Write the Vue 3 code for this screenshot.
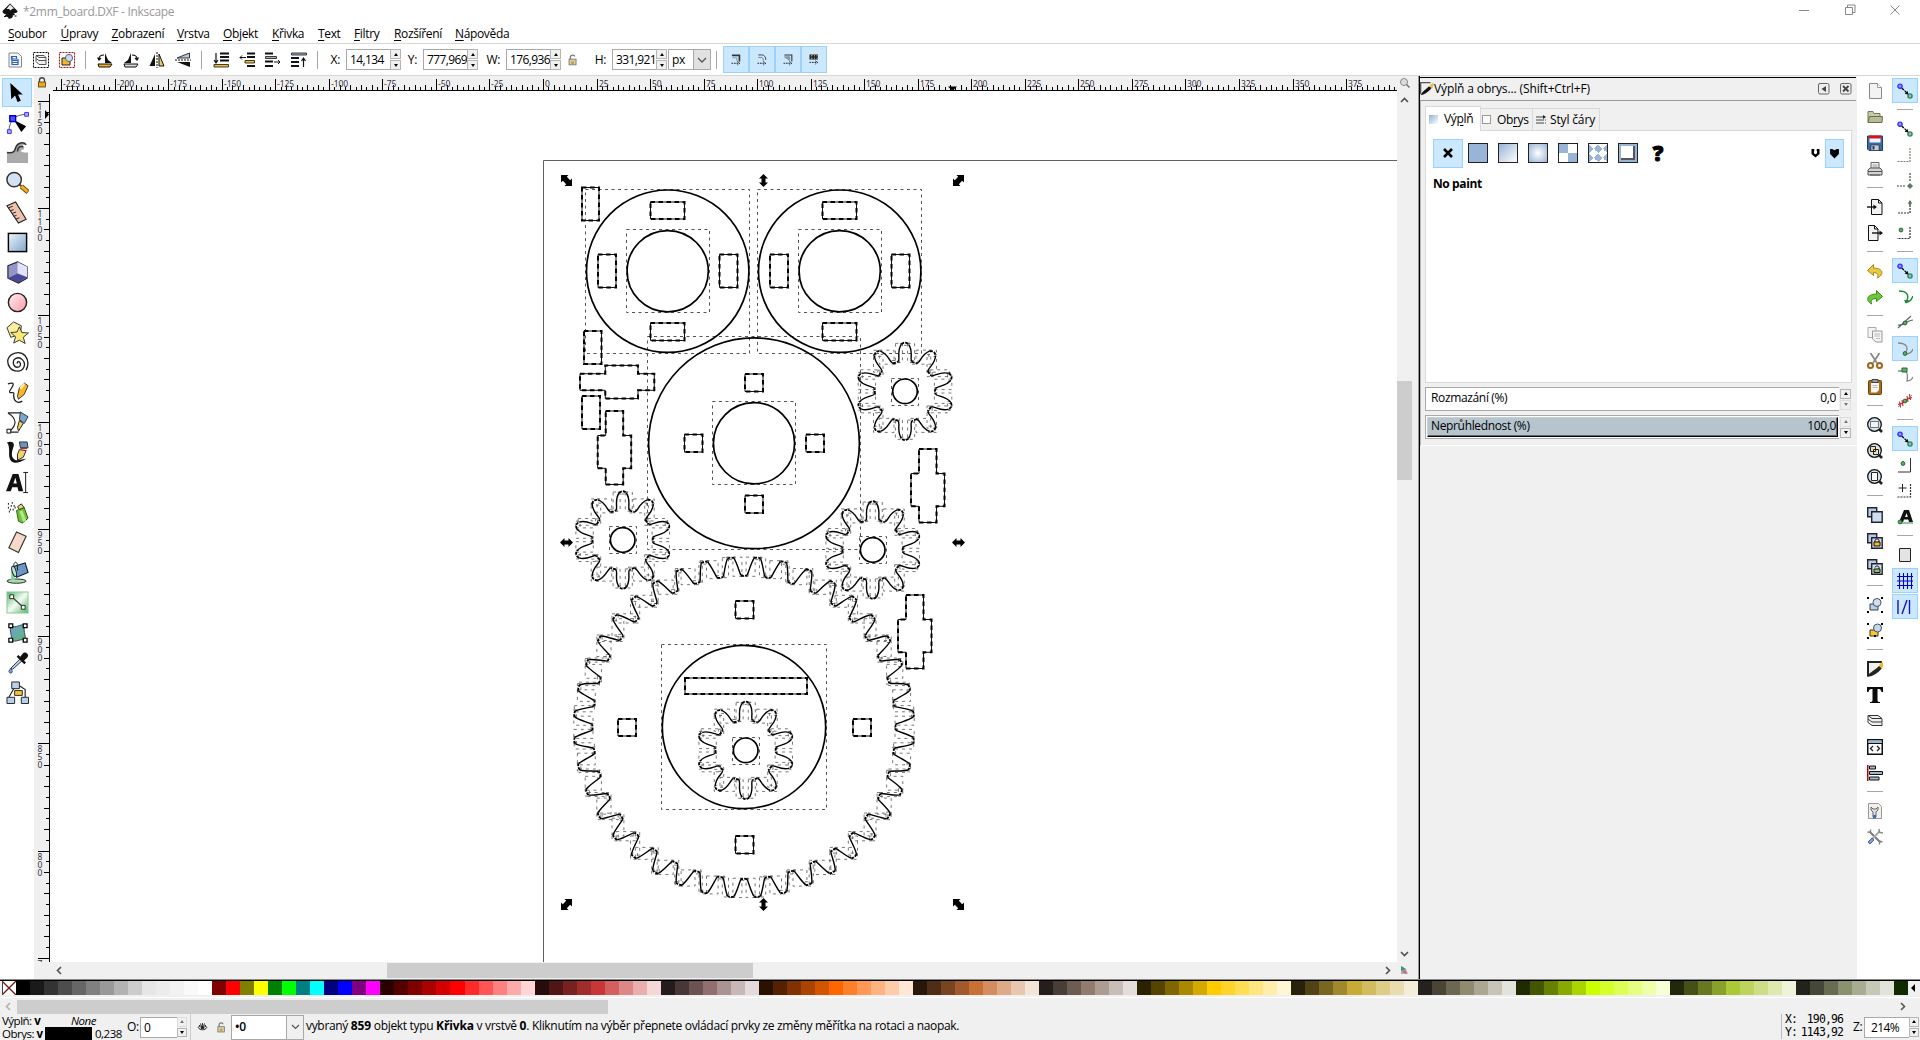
<script setup>
const menu = [
  ['S', 'oubor', 52.5], ['Ú', 'pravy', 51], ['Z', 'obrazení', 65.5], ['V', 'rstva', 46], ['O', 'bjekt', 49],
  ['K', 'řivka', 46], ['T', 'ext', 36], ['F', 'iltry', 40], ['R', 'ozšíření', 61], ['N', 'ápověda', 60],
]

const node = (x, y, c, f) => `<circle cx="${x}" cy="${y}" r="2.1" fill="${f}" stroke="${c}" stroke-width="1.4"/>`
const snapMain = node(3, 3.2, '#33f', '#99f') + node(13, 13, '#2a8a4a', '#8fb8d0') +
  '<path d="M5 5.2l4.5 4.3" stroke="#000" stroke-width="1.3" stroke-dasharray="2.5 1"/><path d="M11.5 11.6L7.6 10.8l3-2.8z" fill="#000"/>'
const greenDot = (x, y) => `<circle cx="${x}" cy="${y}" r="1.9" fill="#5fae6b" stroke="#226633" stroke-width="1"/>`
const stackIcon = '<path d="M.7.700h9v9h-9z" fill="#b9cbe0" stroke="#223" stroke-width="1.400"/><path d="M4.700 4.700h10.500v10.500H4.700z" fill="#cfdff0" stroke="#223" stroke-width="1.400"/>'
const lens = '<path d="M12 12l3 3" stroke="#222" stroke-width="2.6"/><circle cx="7.5" cy="7.5" r="6.8" fill="#d5e3f0" stroke="#111" stroke-width="1.3"/>'
const corners = '<path d="M0 0h2v2H0zM14 0h2v2h-2zM0 14h2v2H0zM14 14h2v2h-2z" fill="#000"/>'

const icons = {
  // document and selection toolbar
  selAll: '<path d="M2 1h9l3.500 3.500V15H2z" fill="#f6f6f6" stroke="#888"/><path d="M4.500 4.500h5v2.500h-5zM4.500 8.500h7M4.500 10.500h7M4.500 12.500h7M5 4v9M11 7v6" fill="none" stroke="#2a62b8" stroke-width="1.200"/>',
  selLayers: '<rect x=".5" y=".5" width="15" height="15" fill="none" stroke="#000" stroke-dasharray="2 1"/><path d="M3 3.500h8l2 2H6zM3 6.500l3 2h7M3 9.500l3 3h7V6M3 3.500v6" fill="#eee" stroke="#555"/>',
  desel: '<rect x=".5" y=".5" width="15" height="15" fill="#fff" stroke="#c00" stroke-dasharray="2 1"/><path d="M3 6h8v7H3z" fill="#f5b828" stroke="#222"/><circle cx="10" cy="6" r="3.600" fill="#c9dbeb" stroke="#567"/>',
  rotL: '<path d="M8 11V1l3 7 4 3z" fill="#111"/><path d="M1 12h14l-2 3H2z" fill="#efb52a" stroke="#111"/><path d="M2 7c0-3 2-4 5-4M.5 5.500L2 8l2-2" fill="none" stroke="#111" stroke-width="1.200"/>',
  rotR: '<path d="M8 11V1L5 8l-4 3z" fill="#111"/><path d="M1 12h14l-2 3H2z" fill="#d5dbe2" stroke="#111"/><path d="M14 7c0-3-2-4-5-4M15.500 5.500L14 8l-2-2" fill="none" stroke="#111" stroke-width="1.200"/>',
  flipH: '<path d="M6 2v12H.5z" fill="#111"/><path d="M10 2v12h5z" fill="#e8c96a" stroke="#111"/><path d="M8 0v16" stroke="#111" stroke-dasharray="2 1"/>',
  flipV: '<path d="M14.500 1v5H2z" fill="#b9c9da" stroke="#333"/><path d="M15 15v-5H2z" fill="#111"/><path d="M0 8h16" stroke="#111" stroke-dasharray="2 1"/>',
  toBottom: '<path d="M7 .5h9v2H7zM7 4h9v2H7zM7 7.500h9v2H7z" fill="#111"/><path d="M1 12.500h14.500v2.500H1z" fill="#eebc35" stroke="#111" stroke-width=".8"/><path d="M3 1v9M1 8l2 3 2-3" fill="none" stroke="#111" stroke-width="1.200"/>',
  lower: '<path d="M8 .5h8v2H8zM8 4h8v2H8zM8 13h8v2H8z" fill="#111"/><path d="M6 8.500h9.500v2.500H6z" fill="#eebc35" stroke="#111" stroke-width=".8"/><path d="M1 5.500h6M3 3.500l-2 2 2 2" fill="none" stroke="#111"/>',
  raise: '<path d="M0 .5h8v2H0zM0 8.500h8v2H0zM0 13h8v2H0z" fill="#111"/><path d="M.5 4.500h11v2H.5z" fill="#9fb2c6" stroke="#111" stroke-width=".8"/><path d="M9 10h6M13 8l2 2-2 2" fill="none" stroke="#111"/>',
  toTop: '<path d="M0 5h8v2H0zM0 9h8v2H0zM0 13h8v2H0z" fill="#111"/><path d="M.5 1h15v2H.5z" fill="#9fb2c6" stroke="#111" stroke-width=".8"/><path d="M12.500 15V6.500M10.500 9l2-3 2 3" fill="none" stroke="#111" stroke-width="1.200"/>',
  lock: '<path d="M5 7V4.500C5 2 9.500 1.500 10 4" fill="none" stroke="#777" stroke-width="1.500"/><rect x="3.500" y="7" width="8" height="6.500" fill="#d8cfa8" stroke="#777"/><path d="M6 9.500h3v3H6z" fill="#c8a030"/>',
  tgl1: '<path d="M3.500 4h9v7.500" fill="none" stroke="#2a3a3a" stroke-width="2"/><path d="M4 7h5.500v4" fill="none" stroke="#889"/><path d="M3 13.500h8M10 11.500l3 2-3 2" stroke="#000" fill="none" stroke-dasharray="2 1"/>',
  tgl2: '<path d="M4 3.500h4c3 0 5 2 5 6" fill="none" stroke="#445" stroke-width="1.200"/><path d="M4 6.500h3c2 0 3 1 3 4" fill="none" stroke="#667"/><path d="M3 13.500h8M10 11.500l3 2-3 2" stroke="#000" fill="none" stroke-dasharray="2 1"/>',
  tgl3: '<path d="M4 3.500h9v8" fill="none" stroke="#333" stroke-width="1.300"/><path d="M4 5h7v6L4 6.500z" fill="#8899a9"/><path d="M3 13.500h8M10 11.500l3 2-3 2" stroke="#000" fill="none" stroke-dasharray="2 1"/>',
  tgl4: '<path d="M3 3h10v6H3z" fill="#222"/><path d="M5 4.500h1.500M8.500 4.500h1M11.500 4.500h1M5 7.500h1.500M8.500 7.500h1M11.500 7.500h1" stroke="#e8d9a0" stroke-width="1.300"/><path d="M3 12.500h8M10 10.500l3 2-3 2" stroke="#000" fill="none" stroke-dasharray="2 1"/>',
  // commands
  new: '<path d="M2.500.5h8l4 4v11h-12z" fill="#f3f3f2" stroke="#888"/><path d="M10.500.5v4h4" fill="#fff" stroke="#999"/>',
  open: '<path d="M1 13V2.500h5l1 2h6V13z" fill="#c9c9a8" stroke="#77775a"/><path d="M2.500 7.500h13L15 13.500H1z" fill="#b7bb96" stroke="#6a6d50"/>',
  save: '<path d="M.5 1h15v14.500H2L.5 14z" fill="#3a68a8" stroke="#1e3f70"/><path d="M2 .5h12v3H2z" fill="#e01010"/><path d="M2.500 3.500h11v4h-11z" fill="#f5f5f5"/><path d="M4 10h8v5.500H4z" fill="#ccc" stroke="#333" stroke-width=".7"/><path d="M5.500 11h2v3.500h-2z" fill="#1e3f70"/>',
  print: '<path d="M4 8V1.500h8V8" fill="#f2f2f2" stroke="#666"/><path d="M5.500 4h5M5.500 6h5" stroke="#999"/><path d="M1 9l2-2h10l2 2v5H1z" fill="#d3d3d0" stroke="#555"/><path d="M1 10.500h14M3 14h10" stroke="#555"/>',
  import: '<path d="M4.500.5h7l3.500 3.500v11.500H4.500z" fill="#f3f3f2" stroke="#111"/><path d="M11.500.5V4H15" fill="none" stroke="#111"/><path d="M0 8h8" stroke="#111" stroke-width="1.400"/><path d="M6.500 5.500L10 8l-3.500 2.500z" fill="#111"/>',
  export: '<path d="M1.500.5h6L11 4v11.500H1.500z" fill="#f3f3f2" stroke="#111"/><path d="M7.500.5V4H11" fill="none" stroke="#111"/><path d="M5 8h9" stroke="#111" stroke-width="1.400"/><path d="M12.500 5.500L16 8l-3.500 2.500z" fill="#111"/>',
  undo: '<path d="M6.500 1.500L.5 7.500l6 5V9.500c4 0 5 2 4 5.500 6-3 7-9.500-4-10z" fill="#eac83c" stroke="#a8841a"/>',
  redo: '<path d="M9.500 1.500l6 6-6 5V9.500c-4 0-6 1.500-5 5.500C-1 12-1.500 5.500 9.500 5z" fill="#6cc83a" stroke="#3f8a1c"/>',
  copy: '<path d="M1 .500h8v10H1z" fill="#f4f4f4" stroke="#aaa"/><path d="M5.500 4h9.500v11h-6l-3.500-3z" fill="#f4f4f4" stroke="#999"/><path d="M7.500 7h5.500M7.500 9h5.500M9 11.500h4" stroke="#bbb"/>',
  cut: '<path d="M3.500 0l6.500 10M12.500 0L6 10" stroke="#8a8a88" stroke-width="1.800"/><circle cx="3.500" cy="12.500" r="2.500" fill="none" stroke="#a0661a" stroke-width="2"/><circle cx="12.500" cy="12.500" r="2.500" fill="none" stroke="#a0661a" stroke-width="2"/>',
  paste: '<rect x="1.500" y="1.500" width="13" height="14" rx="1" fill="#a86c1c" stroke="#6b430c"/><path d="M4 4h8v7l-2.500 2.500H4z" fill="#f6f6f6"/><path d="M5 .500h6v3H5z" fill="#999" stroke="#444"/><path d="M5.500 6.500h5M5.500 8.500h5" stroke="#bbb"/>',
  zoomSel: lens + '<rect x="3.500" y="4.500" width="8" height="6" fill="#eef4fa" stroke="#000" stroke-dasharray="1 1"/>',
  zoomDraw: lens + '<path d="M3.500 3.500h5v5h-5zM6.500 6.500h5v5h-5z" fill="#f6e2a0" stroke="#222"/>',
  zoomPage: lens + '<path d="M4.500 3.500h6v8h-6z" fill="#fff" stroke="#222"/>',
  dup: stackIcon,
  clone: stackIcon + '<path d="M8 9V7.500c0-2 4-2 4 0V9" fill="none" stroke="#111"/><path d="M7 9h6v4H7z" fill="#f3bb26" stroke="#111"/>',
  unlink: stackIcon + '<path d="M8 8.500c0-2 4-2 4 0V10" fill="none" stroke="#111"/><path d="M7 10h6v3.500H7z" fill="#8ec45a" stroke="#111"/>',
  group: corners + '<path d="M3 7h8v6H3z" fill="#bcd0e4" stroke="#345"/><circle cx="10" cy="5.500" r="4" fill="#cfe0ef" stroke="#456"/>',
  ungroup: corners + '<path d="M3 7h8v6H3z" fill="#f5c838" stroke="#431"/><circle cx="10.500" cy="5" r="4" fill="#c5d6e6" stroke="#456"/><path d="M7 12h2v2H7z" fill="#000"/>',
  fill: '<path d="M.5.500h15L.5 15.500z" fill="#eee"/><path d="M0 0h15v2H2v13H0z" fill="#222"/><path d="M0 16c2-5 6-5 12-11l3 2C11 12 7 15 0 16z" fill="#222"/><path d="M12 4l3-3 1 1v4l-2 1z" fill="#f5b81a"/>',
  text: '<path d="M0 0h16v5h-1.500C14 2.500 13 2 10.500 2v11c0 1.500.5 2 2.500 2v1H3v-1c2 0 2.500-.5 2.500-2V2C3 2 2 2.500 1.500 5H0z" fill="#0a0a0a"/>',
  layers: '<path d="M1 2.500h10l4 3H5zM1 6l4 3h10v-3M1 9.500l4 3h10v-3M1 2.500v7" fill="#f0f0f0" stroke="#333"/>',
  xml: '<rect x=".75" y=".750" width="14.500" height="14.500" fill="#fff" stroke="#111" stroke-width="1.500"/><path d="M1.500 1.500h13v2.500h-13z" fill="#9cb9d8"/><path d="M1 4.500h14" stroke="#111"/><path d="M6 7L3.500 9.500 6 12M10 7l2.500 2.500L10 12" fill="none" stroke="#222" stroke-width="1.300"/>',
  align: '<path d="M.750 0v16" stroke="#b00" stroke-width="1.500"/><path d="M2.500 1h6v3h-6zM2.500 6.500h13v3h-13zM2.500 12h9.500v3h-9.500z" fill="#9fb8d0" stroke="#111"/>',
  docPrefs: '<path d="M1.500.5h10l3 3v12h-13z" fill="#f0f0ef" stroke="#999"/><path d="M4 4v3l2 2v5h3V9l2-2V4L9 6H6z" fill="#ddd" stroke="#666"/><path d="M6 12h3v3.500H6z" fill="#3a6db8"/>',
  prefs: '<path d="M2.500 2.500l11 11" stroke="#777" stroke-width="2"/><path d="M13 2l-8 8" stroke="#aaa" stroke-width="2"/><path d="M.5 3l3 .5 0-3M12 0l.5 3.500L16 4M15.500 13l-3-1 0 3.500" fill="none" stroke="#888" stroke-width="1.400"/><path d="M1 13l4-4 2 2-4 4z" fill="#7f9fd0" stroke="#47659a"/>',
  // snapping
  snap: snapMain,
  snBox: '<path d="M13 1v13.500H0" fill="none" stroke="#6a8a6a" stroke-width="1.200" stroke-dasharray="2 1"/>',
  snCorner: '<path d="M13 0v9M0 13h9" fill="none" stroke="#444" stroke-width="1.200" stroke-dasharray="2 1"/><path d="M13 10l3 3-3 3-3-3z" fill="#567a5a"/>',
  snMid: '<path d="M13 6v8H0" fill="none" stroke="#333" stroke-width="1.200" stroke-dasharray="2 1"/><path d="M13 1l2 3-2 3-2-3z" fill="#567a5a"/>',
  snCenter: '<path d="M13 2v11.500H0" fill="none" stroke="#333" stroke-width="1.200" stroke-dasharray="2 1"/>' + greenDot(4, 5),
  snPath: '<path d="M2 2c8 0 10 4 8 9M8 13c4 1 6-1 8-6" fill="none" stroke="#1f8a3a" stroke-width="1.500"/><path d="M7 11h5l-3 3.500z" fill="#1f8a3a"/>',
  snInter: '<path d="M1 13L14 1M1 10c6 1 9-5 15-5" fill="none" stroke="#666" stroke-width="1.200"/>' + greenDot(8, 8),
  snCusp: '<path d="M1 2c9 0 11 5 7 11 5 0 7-2 8-5" fill="none" stroke="#888" stroke-width="1.300"/>' + greenDot(8, 12.5),
  snSmooth: '<path d="M1 4h7c4 2 2 8 2 10 3 0 5-1 6-4" fill="none" stroke="#888" stroke-width="1.300"/><path d="M5 1h5v4H5z" fill="#5fae6b" stroke="#263"/>',
  snLineMid: '<path d="M1 14L15 2" stroke="#999"/><path d="M2.500 8.500l1 6M5 7l1 6M10 3l1 6M12.500 1l1 6M1 11.500l6-2M9 6.500l6-2" stroke="#c22" stroke-width="1.100"/>' + greenDot(8, 8),
  snObjMid: '<path d="M13.500 1v14H1" fill="none" stroke="#333"/>' + greenDot(6, 6.5),
  snRot: '<path d="M5.500 1v8M1.500 5h8" stroke="#222"/><path d="M13.500 1v13H0" fill="none" stroke="#333" stroke-width="1.200" stroke-dasharray="2 1"/>',
  snText: '<path d="M2 13L7 1h5l4 12h-4l-.7-2.500H7L6 13zM8 8h2.700L9.700 4z" fill="#111"/><path d="M3 14h13" stroke="#2a8a4a"/>' + greenDot(3, 13),
  snPage: '<path d="M2.500 1.500h11v13h-11z" fill="#e3e3e3" stroke="#222"/>',
  snGrid: '<path d="M0 3.500h16M0 8h16M0 12.500h16M2.500 0v16M6.500 0v16M10.500 0v16M14.500 0v16" stroke="#0000c8" stroke-width="1.100"/>',
  snGuide: '<path d="M1 1v14M12.500 1v14M5 15l5-14" stroke="#1414c8" stroke-width="1.400"/>',
  brush: '<path d="M0 0h12v1.500H1.500V14H0z" fill="#555"/><path d="M1 15c2-5 5-6 9-10l4 1c-4 5-8 8-13 9z" fill="#111"/><path d="M10 5l4-4 2 1-2 5z" fill="#e8c04a"/>',
}

// toolbox icons, 24-unit box
const tools = [
  '<path d="M8 2l1 17 4-4 2.500 7 3.500-1.500-3-6.500h5z" fill="#000" transform="translate(-3.500 0)"/>',
  '<path d="M3 21C4 9 9 4 21 3.500" fill="none" stroke="#555"/><path d="M8 9l13 7-5 6z" fill="#000"/><path d="M4 5h6v6H4z" fill="#55f" stroke="#00c" stroke-width="1.500"/><path d="M19.500 1.500h4v4h-4zM1.500 19.500h4v4h-4z" fill="#aaf" stroke="#33f"/>',
  '<path d="M1 12c7 1 8-1 9-5 2-5 8-7 12-3-3-1-5 0-5 2 2-1 3 2 1 3-3 0-5 3 5 3v11H1z" fill="#aaa"/><path d="M1 12c7 1 8-1 9-5 2-5 8-7 11-3M12 11c0-4 2-6 6-5" fill="none" stroke="#333" stroke-width="1.600"/>',
  '<path d="M14 14l3 3" stroke="#444" stroke-width="2"/><path d="M16 16l7 6" stroke="#7a5010" stroke-width="5"/><path d="M16 16l6.500 5.500" stroke="#f5ae20" stroke-width="3"/><circle cx="8.500" cy="9" r="7.500" fill="#d3e2f0" stroke="#333" stroke-width="1.500"/>',
  '<path d="M1 5l9-4 11 18-8 4z" fill="#efc2ae" stroke="#222" stroke-width="1.200"/><path d="M3 7l4-1.500M5 10l3-1M6.500 13l4-1.500M8 16l3-1M10 19l4-1.500" stroke="#222"/>',
  '<rect x="2.500" y="2.500" width="19" height="19" fill="url(#gBlue)" stroke="#000" stroke-width="1.500"/>',
  '<path d="M2 5l10-4 10 5v12l-9 5-11-5z" fill="#9494c8" stroke="#223" stroke-width="1.200"/><path d="M12 1l10 5v11l-10-4z" fill="#e2e2fa"/><path d="M2 18l10-5 10 4-9 5.500z" fill="#484894"/>',
  '<circle cx="12" cy="12" r="9.500" fill="url(#gPink)" stroke="#222" stroke-width="1.500"/>',
  '<path d="M1 7l7-6 8 4-1 9-10 3z" fill="#f8f0a0" stroke="#333"/><path d="M14 6l2.500 6 7 .5-5.500 4.500 2 6.500-6-3.500-6 3 2-6.500L5 12l6.500-.5z" fill="#fbe874" stroke="#333"/>',
  '<path d="M12 13c-1-2 2-3 3 0 1 4-5 6-7 1-2-6 5-9 9-5 5 5 1 12-5 12C5 21 1 15 2 9 4 2 14-1 20 5c4 5 3 11 1 15" fill="none" stroke="#222" stroke-width="1.400"/>',
  '<path d="M2 3c8-3 6 2 2 7-2 5 6-1 4 5 0 6 4 9 9 6" fill="none" stroke="#222" stroke-width="1.300"/><path d="M12 16l2-9 5-5 4 3-4 9-6 5z" fill="#f7b426" stroke="#333"/><path d="M14 7l4-5 2 1-4 6z" fill="#fff2a0"/>',
  '<path d="M2 2h13M2 2c10 6 9 13 2 19M5 22h8" fill="none" stroke="#222" stroke-width="1.200"/><path d="M15 1l8 5-4 7-5-4z" fill="#7fa4cc" stroke="#234"/><path d="M14 10l4 3-5 8-1-4z" fill="#f3cf5a" stroke="#222"/><path d="M1 19h4v4H1z" fill="#fff" stroke="#000"/>',
  '<path d="M1 1.500c5-2 8 0 7 4-2 6-3 10 0 13 3 3 5 1 13 0-8 5-15 6-17 0C2 14 5 6 1 1.500z" fill="#111"/><path d="M14 1h8l1 6h-8z" fill="#6e93b8" stroke="#234"/><path d="M15 7h7v1.500h-7z" fill="#c22"/><path d="M14 9l7 1-3 7-6 3 0-6z" fill="#f5d26a" stroke="#222"/>',
  '<path d="M0 21L7 3h6l5 18h-5l-1-4H6.500L5 21zM7.700 13h3.600L9.800 7z" fill="#111"/><path d="M18 1.500h5M18 22.500h5M20.500 2v20" stroke="#111"/>',
  '<path d="M2 3h1M5 5h1M2 7h1M6 2h1M8 5h1M4 9h1M9 7h1M3 11h1M7 9h1" stroke="#111" stroke-width="1.800"/><path d="M12 6l4-3 3 4-5 2z" fill="#f0d080" stroke="#222"/><path d="M11 10l8-3 4 11-6 5-4-2z" fill="#6fc23a" stroke="#2a5a12"/><path d="M14 11l3-1 4 10-3 2z" fill="#b5e88a"/>',
  '<path d="M11 1l10 4.500-8 17-10-5z" fill="#f8d8c8" stroke="#333" stroke-width="1.200"/>',
  '<ellipse cx="11" cy="21" rx="10" ry="2.200" fill="#a9dcb0" stroke="#222"/><path d="M4 20c3-3 0-9 3-13l3 10c-2 0-2 2 1 3z" fill="#8ccf98"/><path d="M7 6l13-4 3 10-12 5z" fill="#6d97c2" stroke="#123" stroke-width="1.200"/><ellipse cx="8.500" cy="11" rx="2" ry="5.500" fill="#bfe5c8" stroke="#123" transform="rotate(-18 8 11)"/><path d="M8 5c0-5 4-5 4 0v5" fill="none" stroke="#222"/>',
  '<rect x="1" y="1" width="22" height="22" fill="url(#gGreen)" stroke="#8ccb98"/><path d="M6 6l12 11" stroke="#444" stroke-width="1.300"/><path d="M4 4h4v4H4zM16 15h4v4h-4z" fill="#fff" stroke="#222"/>',
  '<path d="M5 5c6 3 9-2 15-1-3 6 1 10 0 16-6-2-9 3-15 0 2-6-2-9 0-15z" fill="url(#gMesh)" stroke="#345"/><path d="M3 3h4v4H3zM18 3h4v4h-4zM3 18h4v4H3zM18 18h4v4h-4z" fill="#fff" stroke="#000" stroke-width="1.300"/>',
  '<path d="M5 18L15 8l2 2L7 19z" fill="#b8d2ea" stroke="#234"/><path d="M14 7l4-5c3-2 7 2 4 5l-4 4z" fill="#111"/><path d="M12 5l8 8" stroke="#111" stroke-width="2.500"/><path d="M5 18c-3 3-2 5 0 5s2-2 0-5z" fill="#7aa7d8" stroke="#357"/>',
  '<path d="M8 8L3 17M14 5l6 4v8" fill="none" stroke="#222" stroke-width="1.200"/><path d="M6 1h8v7H6zM1 17h8v6.500H1zM16 17h7.500v6.500h-7.500z" fill="#b9d0ea" stroke="#222"/><path d="M9 10h8v5H9z" fill="#f8c926" stroke="#222"/>',
]

const cmds = ['new', 'open', 'save', 'print', 0, 'import', 'export', 0, 'undo', 'redo', 0, 'copy', 'cut', 'paste', 0,
  'zoomSel', 'zoomDraw', 'zoomPage', 0, 'dup', 'clone', 'unlink', 0, 'group', 'ungroup', 0,
  'fill', 'text', 'layers', 'xml', 'align', 0, 'docPrefs', 'prefs']
const snaps = ['*snap', 0, 'snap', 'snBox', 'snCorner', 'snMid', 'snCenter', 0, '*snap', 'snPath', 'snInter', '*snCusp',
  'snSmooth', 'snLineMid', 0, '*snap', 'snObjMid', 'snRot', 'snText', 0, 'snPage', '*snGrid', '*snGuide']
const barA = ['selAll', 'selLayers', 'desel']
const barB = ['rotL', 'rotR', 'flipH', 'flipV']
const barC = ['toBottom', 'lower', 'raise', 'toTop']
const toggles = ['tgl1', 'tgl2', 'tgl3', 'tgl4']

const swatches = (
  '000000 1a1a1a 333333 4d4d4d 666666 808080 999999 b3b3b3 cccccc e6e6e6 ececec f2f2f2 f9f9f9 ffffff ' +
  '800000 ff0000 808000 ffff00 008000 00ff00 008080 00ffff 000080 0000ff 800080 ff00ff ' +
  '2b0000 550000 800000 aa0000 d40000 ff0000 ff2a2a ff5555 ff8080 ffaaaa ffd5d5 ' +
  '280b0b 501616 782121 a02c2c c83737 d35f5f de8787 e9afaf f4d7d7 241c1c 483737 6c5353 916f6f ac9393 c8b7b7 e3dbdb ' +
  '2b1100 552200 803300 aa4400 d45500 ff6600 ff7f2a ff9955 ffb380 ffccaa ffe6d5 ' +
  '28170b 502d16 784421 a05a2c c87137 d38d5f deaa87 e9c6af f4e3d7 241f1c 483e37 6c5d53 917c6f ac9d93 c8beb7 e3dedb ' +
  '2b2200 554400 806600 aa8800 d4aa00 ffcc00 ffd42a ffdd55 ffe680 ffeeaa fff6d5 ' +
  '28220b 504416 786721 a0892c c8ab37 d3bc5f decd87 e9ddaf f4eed7 24221c 484537 6c6753 918a6f aca793 c8c4b7 e3e2db ' +
  '222b00 445500 668000 88aa00 aad400 ccff00 d4ff2a ddff55 e5ff80 eeffaa f6ffd5 ' +
  '22280b 445016 677821 89a02c abc837 bcd35f cdde87 dde9af eef4d7 22241c 454837 676c53 8a916f a7ac93 c4c8b7 e2e3db 112b00'
).split(' ')

// rulers: 2.1415 px per unit, origin at x = 543
const U = 2.1415
const hTicks = []
const hLabels = []
for (let i = -92; i <= 160; i++) {
  const x = Math.round(543 + i * 2.5 * U)
  if (x < 53 || x > 1396) continue
  const major = ((i % 10) + 10) % 10 === 0
  hTicks.push(`M${x + 0.5} 90V${major ? 79 : i % 2 === 0 ? 85 : 87}`)
  if (major) hLabels.push({ x: x + 2, t: String(i * 2.5) })
}
const vTicks = []
const vLabels = []
for (let i = 0; i < 81; i++) {
  const y = Math.round(101 + i * 5 * U)
  if (y > 960) continue
  const major = i % 10 === 0
  vTicks.push(`M49 ${y + 0.5}H${major ? 38 : i % 2 === 0 ? 44 : 46}`)
  if (major) {
    String(1150 - i * 5).split('').forEach((c, k) => {
      const base = y + 8.500 + k * 8
      if (base < 968) vLabels.push({ y: base, t: c })
    })
  }
}

// drawing
const rings = [
  [667.7, 271.2, 81.2], [667.7, 271.2, 40.6], [839.7, 271.2, 81.2], [839.7, 271.2, 40.6],
  [754, 443.3, 105.4], [754, 443.3, 40.6], [744, 727, 81.7],
  [905, 391.3, 12.3], [622.7, 540, 12.3], [872.7, 550, 12.3], [745.7, 750.3, 12.3],
]
const boxes = [
  [582, 187.500, 17, 33], [584, 331, 17.500, 33], [582, 396, 18, 33],
  [650.500, 202, 34, 17], [650.500, 323, 34, 17.500], [598, 254.500, 18, 33], [719.500, 254.500, 18, 33],
  [822.500, 202, 34, 17], [822.500, 323, 34, 17.500], [770, 254.500, 18, 33], [891.500, 254.500, 18, 33],
  [745, 374, 18, 17.500], [745, 495.500, 18, 17.500], [684.500, 434.500, 18, 17.500], [806, 434.500, 18, 17.500],
  [735.500, 601, 18, 17.500], [735.500, 836, 18, 17.500], [618, 719, 18, 17], [853, 719, 18, 17],
  [685, 678, 122, 16],
].map(([x, y, w, h]) => `M${x} ${y}h${w}v${h}h${-w}z`)
const vCross = (x, y) => `M${x} ${y}h17.500v24.500h8v32.800h-8v16.200h-17.500v-16.200h-8v-32.800h8z`
boxes.push('M580 373.700h25.300v-8.300h32.700v8.300h16.300v16.600h-16.300v8.300h-32.700v-8.300h-25.300z',
  vCross(605.700, 411), vCross(919, 449), vCross(906, 595))

const gears = { flanks: [], tips: [], bounds: [] }
function gear(cx, cy, n, phase, half, valley) {
  // half: tooth profile [half width, radius] from root to tip
  const at = (w, r, a) => [cx + r * Math.sin(a) + w * Math.cos(a), cy - r * Math.cos(a) + w * Math.sin(a)]
  const f = (p) => p.map((v) => v.toFixed(1)).join(' ')
  const bound = (pts) => {
    const xs = pts.map((p) => p[0]), ys = pts.map((p) => p[1])
    const x = Math.min(...xs) - 1, y = Math.min(...ys) - 1
    gears.bounds.push(`M${x.toFixed(1)} ${y.toFixed(1)}H${(Math.max(...xs) + 1).toFixed(1)}V${(Math.max(...ys) + 1).toFixed(1)}H${x.toFixed(1)}z`)
  }
  for (let k = 0; k < n; k++) {
    const a = phase + (k * 2 * Math.PI) / n
    const next = a + (2 * Math.PI) / n
    for (const s of [-1, 1]) {
      const p = half.map(([w, r]) => at(s * w, r, a))
      gears.flanks.push(`M${f(p[0])}C${f(p[1])} ${f(p[2])} ${f(p[3])}`)
      bound([p[0], p[2], p[3]])
    }
    const l = at(-half[3][0], half[3][1], a), r = at(half[3][0], half[3][1], a), t = at(0, half[3][1] + valley[0], a)
    gears.tips.push(`M${f(l)}Q${f(t)} ${f(r)}`)
    bound([l, r])
    const b = at(half[0][0], half[0][1], a), c = at(-half[0][0], half[0][1], next)
    const m = at(0, half[0][1] + valley[1], (a + next) / 2)
    gears.tips.push(`M${f(b)}Q${f(m)} ${f(c)}`)
    bound([b, c])
  }
}
const small = [[6.800, 29.800], [4.600, 32], [8.600, 40], [3.600, 47]]
const pinion = [[905, 391.300], [622.700, 540], [872.700, 550], [745.700, 750.300]]
pinion.forEach(([x, y]) => gear(x, y, 10, 0, small, [3.500, 0]))
gear(744, 727.300, 40, Math.PI / 40, [[8.800, 151.800], [6.800, 158], [6, 164], [3.200, 169.500]], [1.500, -1])

const straight = 'M-6.500 0L-2-4.500V-2H2V-4.500L6.500 0L2 4.500V2H-2V4.500z'
const diagonal = 'M-5.500-5.500H2L.3-3.700L3.700-.3L5.500-2V5.500H-2L-.3 3.700L-3.700.3L-5.500 2z'
const handles = [
  [566.500, 180.500, 0, 1], [763.500, 180.500, 90, 0], [958.500, 180.500, 90, 1], [566.500, 542.500, 0, 0],
  [958.500, 542.500, 0, 0], [566.500, 904.500, 90, 1], [763.500, 904.500, 90, 0], [958.500, 904.500, 0, 1],
]
const paints = ['flat', 'linear', 'radial', 'mesh', 'pattern', 'swatch']
</script>

<template>
  <div class="window">
    <svg class="defs" width="0" height="0">
      <defs>
        <linearGradient id="gBlue" x1="0" y1="0" x2="1" y2="1"><stop offset="0" stop-color="#eef4fa" /><stop offset="1" stop-color="#7fa5cc" /></linearGradient>
        <linearGradient id="gPink" x1="0" y1="0" x2="1" y2="1"><stop offset="0" stop-color="#fff0f2" /><stop offset="1" stop-color="#ff9aa6" /></linearGradient>
        <linearGradient id="gGreen" x1="0" y1="0" x2="1" y2="1"><stop offset="0" stop-color="#4fb565" /><stop offset=".5" stop-color="#f4fbf5" /><stop offset="1" stop-color="#4fb565" /></linearGradient>
        <linearGradient id="gMesh" x1="0" y1="0" x2="1" y2="1"><stop offset="0" stop-color="#6f9fd0" /><stop offset="1" stop-color="#62b878" /></linearGradient>
      </defs>
    </svg>

    <header class="title">
      <svg class="logo" width="16" height="17" viewBox="0 0 16 17"><path d="M8 .5L15.500 8c.5 1.500-2 2-4 2.500 2 .5 2 1.500.5 1.500-1.500.5-2 1-1 1.500-1 2-4 3-5 1.500 1-.5 0-1-2-1.500s-1-1.500.5-2C2 11 .2 9.500.5 8z" fill="#111" /><path d="M8 1.500l4 4-2 .5-1.500 1.500L7 6 4.500 6z" fill="#e6edf4" /><path d="M2 13.500h2M12.500 13h2" stroke="#111" /></svg>
      <span class="caption">*2mm_board.DXF - Inkscape</span>
      <svg class="winctl" width="110" height="14" viewBox="0 0 110 14" fill="none" stroke="#888"><path d="M4 7.500h10M50.500 4.500h7v7h-7zM52.500 4v-2h7.500v7.500h-2M95.500 2.500l9 9M104.500 2.500l-9 9" /></svg>
    </header>

    <nav class="menu">
      <span v-for="m in menu" :key="m[1]" :style="{ width: m[2] + 'px' }"><u>{{ m[0] }}</u>{{ m[1] }}</span>
    </nav>

    <div class="toolbar">
      <svg v-for="n in barA" :key="n" class="tb" viewBox="0 0 16 16" v-html="icons[n]" />
      <i class="vsep" />
      <svg v-for="n in barB" :key="n" class="tb" viewBox="0 0 16 16" v-html="icons[n]" />
      <i class="vsep" />
      <svg v-for="n in barC" :key="n" class="tb" viewBox="0 0 16 16" v-html="icons[n]" />
      <i class="vsep" />
      <label class="lx">X:</label><span class="entry">14,134</span><span class="spin"><b class="up" /><b class="dn" /></span>
      <label class="ly">Y:</label><span class="entry">777,969</span><span class="spin"><b class="up" /><b class="dn" /></span>
      <label class="lw">W:</label><span class="entry">176,936</span><span class="spin"><b class="up" /><b class="dn" /></span>
      <svg class="lk" viewBox="0 0 16 16" v-html="icons.lock" />
      <label class="lh">H:</label><span class="entry">331,921</span><span class="spin"><b class="up" /><b class="dn" /></span>
      <span class="unit"><span>px</span><i><svg width="10" height="6" viewBox="0 0 10 6"><path d="M1 1l4 4 4-4" fill="none" stroke="#555" stroke-width="1.300" /></svg></i></span>
      <i class="vsep last" />
      <span v-for="n in toggles" :key="n" class="tgl"><svg viewBox="0 0 18 18" width="15" height="15" v-html="icons[n]" /></span>
    </div>

    <main class="work">
      <aside class="toolbox">
        <span v-for="(t, i) in tools" :key="i" :class="{ on: i === 0 }"><svg width="23" height="23" viewBox="0 0 24 24" v-html="t" /></span>
      </aside>

      <section class="editor">
        <svg class="hruler" width="1363" height="15" viewBox="34 76 1363 15">
          <path d="M39.500 82v-2c0-3 5-3 5 0v2" fill="none" stroke="#444" stroke-width="1.300" /><rect x="38.500" y="82" width="7" height="5" fill="#e9a820" stroke="#553a00" stroke-width=".8" />
          <path d="M53 90.500H1397" stroke="#000" />
          <path :d="hTicks.join('')" stroke="#000" />
          <text v-for="l in hLabels" :key="l.x" :x="l.x" y="87">{{ l.t }}</text>
          <path d="M948 86.500h9l-4.500 4.500z" fill="#000" />
        </svg>
        <div class="corner"><svg width="12" height="12" viewBox="0 0 12 12"><circle cx="5" cy="5" r="3.500" fill="#ddd" stroke="#888" /><path d="M7.500 7.500l3 3" stroke="#777" stroke-width="1.600" /></svg></div>
        <svg class="vruler" width="16" height="871" viewBox="34 91 16 871">
          <path d="M49.500 94V962" stroke="#000" />
          <path :d="vTicks.join('')" stroke="#000" />
          <text v-for="l in vLabels" :key="l.y" x="37.500" :y="l.y">{{ l.t }}</text>
          <path d="M45 110v9l4-4.500z" fill="#000" />
        </svg>
        <svg class="canvas" width="1347" height="871" viewBox="50 91 1347 871" fill="none">
          <path d="M1397 160.500H543.500V962" stroke="#606060" />
          <g class="bb">
            <rect v-for="(c, i) in rings" :key="i" :x="Math.floor(c[0] - c[2] - 1) + 0.5" :y="Math.floor(c[1] - c[2] - 1) + 0.5" :width="Math.round(c[2] * 2 + 2)" :height="Math.round(c[2] * 2 + 2)" />
          </g>
          <path class="gb" :d="gears.bounds.join('')" />
          <circle v-for="(c, i) in rings" :key="'c' + i" :cx="c[0]" :cy="c[1]" :r="c[2]" stroke="#000" stroke-width="1.700" />
          <path :d="boxes.join('')" stroke="#111" stroke-width="1" />
          <path :d="boxes.join('')" stroke="#000" stroke-width="2" stroke-dasharray="4.500 3.500" />
          <path :d="gears.flanks.join('')" stroke="#000" stroke-width="1.400" />
          <path :d="gears.tips.join('')" stroke="#000" stroke-width="1.800" stroke-dasharray="3 1.200" />
          <path v-for="(h, i) in handles" :key="'h' + i" :d="h[3] ? diagonal : straight" :transform="`translate(${h[0]} ${h[1]}) rotate(${h[2]})`" fill="#000" />
        </svg>
        <div class="vscroll"><svg width="9" height="6" viewBox="0 0 9 6"><path d="M1 5l3.500-3.500L8 5" /></svg><i /><svg width="9" height="6" viewBox="0 0 9 6"><path d="M1 1l3.500 3.500L8 1" /></svg></div>
        <div class="hscroll"><svg width="6" height="9" viewBox="0 0 6 9"><path d="M5 1L1.500 4.500 5 8" /></svg><i /><svg width="6" height="9" viewBox="0 0 6 9"><path d="M1 1l3.500 3.500L1 8" /></svg></div>
        <div class="cms"><svg width="10" height="10" viewBox="0 0 10 10"><path d="M2 1l5 3 2 5H2z" fill="#b8a8c8" /><path d="M2 1l5 3-5 2z" fill="#3a9a6a" /><path d="M3 7l3-2 2 4z" fill="#d06070" /></svg></div>
      </section>

      <section class="dock">
        <div class="dtitle">
          <svg width="14" height="14" viewBox="0 0 16 16" v-html="icons.brush" /><span>Výplň a obrys... (Shift+Ctrl+F)</span>
          <svg width="34" height="12" viewBox="0 0 34 12"><rect x=".5" y=".5" width="10.500" height="10.500" rx="1.500" fill="#eee" stroke="#666" /><path d="M8 3v6L3.500 6z" fill="#444" /><rect x="22.500" y=".5" width="10.500" height="10.500" rx="1.500" fill="#eee" stroke="#666" /><path d="M25 3l5.500 5.500M30.500 3L25 8.500" stroke="#444" stroke-width="1.800" /></svg>
        </div>
        <div class="dbody">
          <div class="tabs">
            <span class="tab on"><i class="ic1" />Vý<u>p</u>lň</span>
            <span class="tab t2"><i class="ic2" />Ob<u>r</u>ys</span>
            <span class="tab t3"><svg width="10" height="10" viewBox="0 0 10 10"><path d="M0 2h8M0 5h10M0 8h10" stroke="#444" stroke-width="1.200" stroke-dasharray="8 1" /><path d="M7 0l3 2-3 2z" fill="#222" /></svg>Styl čáry</span>
          </div>
          <div class="page">
            <div class="paints">
              <span class="pbtn on"><svg width="12" height="12" viewBox="0 0 12 12"><path d="M2 2l8 8M10 2l-8 8" stroke="#000" stroke-width="2.500" /></svg></span>
              <span v-for="p in paints" :key="p" class="pbtn"><i :class="p" /></span>
              <span class="pbtn q">?</span>
              <span class="rule"><svg width="9" height="10" viewBox="0 0 9 10"><path d="M.5 1h2.500l.5 1h2L6 1h2.500v5L4.500 9.500.5 6z" fill="#000" /><ellipse cx="4.500" cy="4" rx="1.600" ry="2.300" fill="#fff" /></svg></span>
              <span class="rule on"><svg width="11" height="11" viewBox="0 0 9 10"><path d="M.5 1h2l2 1 2-1h2v4.500L4.500 9.500.5 5.500z" fill="#000" /></svg></span>
            </div>
            <strong>No paint</strong>
          </div>
          <div class="row"><div class="slider"><span>Rozmazání (%)</span><span>0,0</span></div><span class="spin"><b class="up" /><b class="dn off" /></span></div>
          <div class="row"><div class="slider full"><p><span>Neprůhlednost (%)</span><span>100,0</span></p></div><span class="spin"><b class="up off" /><b class="dn" /></span></div>
        </div>
      </section>

      <aside class="cmds">
        <template v-for="(c, i) in cmds" :key="i"><span v-if="c"><svg width="16" height="16" viewBox="0 0 16 16" v-html="icons[c]" /></span><hr v-else></template>
      </aside>
      <aside class="snaps">
        <template v-for="(c, i) in snaps" :key="i"><span v-if="c" :class="{ on: c[0] === '*' }"><svg width="16" height="16" viewBox="0 0 16 16" v-html="icons[c.replace('*', '')]" /></span><hr v-else></template>
      </aside>
    </main>

    <div class="palette">
      <svg width="14" height="14" viewBox="0 0 14 14"><rect width="14" height="14" fill="#fff" /><path d="M0 0l14 14M14 0L0 14" stroke="#7a1515" stroke-width="1.300" /><path d="M.5 0v14" stroke="#444" /></svg>
      <i v-for="(s, i) in swatches" :key="i" :style="{ background: '#' + s }" />
      <svg class="pal" width="6" height="10" viewBox="0 0 6 10"><path d="M5 1v8L1 5z" fill="#000" /></svg>
    </div>
    <div class="pscroll"><svg width="6" height="9" viewBox="0 0 6 9"><path d="M5 1L1.500 4.500 5 8" stroke="#b0b0b0" /></svg><i /><span class="gap" /><svg width="6" height="9" viewBox="0 0 6 9"><path d="M1 1l3.500 3.500L1 8" stroke="#555" /></svg></div>

    <footer class="status">
      <div class="style">
        <div><span class="k">Výplň: <b>v</b></span><em>None</em></div>
        <div><span class="k">Obrys: <b>v</b></span><i class="black" /><span class="sw">0,238</span></div>
      </div>
      <span class="o">O:</span><span class="entry oe">0</span><span class="spin so"><b class="up off" /><b class="dn" /></span>
      <i class="fsep" />
      <svg class="eye" width="11" height="10" viewBox="0 0 11 10"><path d="M1 5.500C3 3 8 3 10 5.500 8 8.500 3 8.500 1 5.500zM2 3l1 1M5.500 1v2M9 3L8 4M3.500 1.500l.5 1.500M7.500 1.500L7 3" fill="#ddd" stroke="#333" /><circle cx="5.500" cy="5.500" r="1.800" fill="#222" /></svg>
      <svg class="fl" width="13" height="13" viewBox="0 0 16 16" v-html="icons.lock" />
      <span class="layer"><span>•0</span><i><svg width="9" height="6" viewBox="0 0 9 6"><path d="M1 1l3.500 3.500L8 1" fill="none" stroke="#555" stroke-width="1.200" /></svg></i></span>
      <span class="msg">vybraný <b>859</b> objekt typu <b>Křivka</b> v vrstvě <b>0</b>. Kliknutím na výběr přepnete ovládací prvky ze změny měřítka na rotaci a naopak.</span>
      <div class="coords"><div><span>X:</span><span>190,96</span></div><div><span>Y:</span><span>1143,92</span></div></div>
      <span class="z">Z:</span><span class="entry ze">214%</span><span class="spin so"><b class="up" /><b class="dn" /></span>
    </footer>
  </div>
</template>

<style>
html, body { margin: 0; overflow: hidden; background: #fff; }
</style>

<style scoped>
.window { width: 1920px; height: 1040px; display: flex; flex-direction: column; background: #fff; font: 12px/16px "Open Sans", "Noto Sans", sans-serif; letter-spacing: -0.35px; color: #000; overflow: hidden; }
.window * { box-sizing: border-box; }
.defs { position: absolute; }
svg { display: block; flex: none; }
u { text-decoration: underline; text-underline-offset: 2px; }
.title { height: 24px; flex: none; display: flex; align-items: center; padding-left: 2px; color: #999; }
.logo { margin-top: -2px; }
.caption { margin-left: 5px; letter-spacing: -.3px; }
.winctl { margin: -4px 15px 0 auto; }
.menu { height: 20px; flex: none; display: flex; align-items: center; padding-left: 8px; border-bottom: 1px solid #d8d8d8; }
.menu span { flex: none; white-space: nowrap; }
.toolbar { height: 32px; flex: none; display: flex; align-items: center; border-bottom: 1px solid #d8d8d8; padding: 0 0 0 2px; }
.tb { width: 16px; height: 16px; margin: 0 5px; }
.vsep { width: 1px; height: 18px; background: #a5a5a5; margin: 0 6px 0 5px; flex: none; }
.toolbar label { flex: none; text-align: right; padding-right: 6px; }
.lx { width: 22px; } .ly { width: 22px; } .lw { width: 28px; } .lh { width: 30px; }
.entry { width: 44px; height: 21px; flex: none; border: 1px solid #a9a9a9; border-right: 0; background: #fff; padding-left: 3px; line-height: 19px; white-space: nowrap; letter-spacing: -.6px; }
.spin { width: 11px; height: 21px; flex: none; display: flex; flex-direction: column; gap: 1px; }
.spin b { flex: 1; background: #f0f0f0; border: 1px solid #b5b5b5; display: flex; align-items: center; justify-content: center; }
.spin b::before { content: ""; border: 2.500px solid transparent; }
.spin .up::before { border-bottom: 3px solid #000; border-top: 0; }
.spin .dn::before { border-top: 3px solid #000; border-bottom: 0; }
.spin .off { border-color: #ddd; }
.spin .off.up::before { border-bottom-color: #777; }
.spin .off.dn::before { border-top-color: #777; }
.lk { width: 14px; height: 14px; margin: 0 2px 0 5px; }
.unit { width: 43px; height: 21px; flex: none; display: flex; border: 1px solid #a9a9a9; margin-left: 1px; }
.unit span { flex: 1; padding-left: 3px; line-height: 19px; }
.unit i { width: 17px; background: #e1e1e1; border-left: 1px solid #a9a9a9; display: flex; align-items: center; justify-content: center; }
.vsep.last { margin-right: 6px; }
.tgl { width: 26px; height: 27px; flex: none; display: flex; align-items: center; justify-content: center; background: #cce8ff; border: 1px solid #99d1ff; }
.work { height: 903px; flex: none; display: flex; }
.toolbox { width: 34px; flex: none; padding: 2px 2px 0; }
.toolbox span { width: 30px; height: 29px; margin-bottom: 1px; display: flex; align-items: center; justify-content: center; }
.toolbox .on, .snaps .on { background: #cce8ff; border: 1px solid #99d1ff; }
.editor { flex: none; display: grid; grid-template-columns: 16px 1347px 21px; grid-template-rows: 15px 871px 17px; background: #f0f0f0; }
.hruler { grid-column: 1 / 3; }
.hruler text, .vruler text { font: 8.500px "Noto Sans", sans-serif; fill: #334; letter-spacing: -.1px; }
.corner { padding: 1px 0 0 2px; }
.canvas { background: #fff; }
.bb { stroke: #555; stroke-width: 1; stroke-dasharray: 3 3.500; }
.gb { stroke: #555; stroke-width: .8; stroke-dasharray: 3 4; }
.vscroll { display: flex; flex-direction: column; padding: 6px 0 5px; width: 15px; align-items: center; }
.vscroll i { width: 15px; height: 99px; background: #cdcdcd; margin: 278px 0 auto; }
.vscroll path, .hscroll path, .pscroll path { fill: none; stroke-width: 1.600; }
.vscroll path, .hscroll path { stroke: #505050; }
.hscroll { grid-column: 1 / 3; display: flex; align-items: center; padding: 0 6px 0 22px; }
.hscroll i { width: 366px; height: 15px; background: #cdcdcd; margin: 0 auto 0 325px; }
.cms { padding: 3px 0 0 2px; }
.dock { width: 441px; flex: none; background: #f0f0f0; border-left: 1px solid #999; border-right: 2px solid #fff; box-shadow: inset 1px 0 #000; padding: 1px 0 0 1px; }
.dtitle { height: 24px; border-top: 1px solid #000; border-bottom: 1px solid #999; margin-right: 1px; display: flex; align-items: center; }
.dtitle span { letter-spacing: -.12px; }
.dtitle svg:last-child { margin: 0 4px 0 auto; }
.dbody { height: 345px; border-left: 1px solid #b8b8b8; border-bottom: 1px solid #fff; padding: 5px 5px 0 4px; }
.tabs { display: flex; align-items: flex-end; height: 24px; }
.tab { height: 22px; border: 1px solid #d9d9d9; border-left: 0; border-bottom: 0; display: flex; align-items: center; width: 52px; white-space: nowrap; }
.tab.on { width: 56px; height: 25px; background: #fff; border-left: 1px solid #d9d9d9; position: relative; margin-bottom: -1px; }
.tab.t3 { width: 67px; padding-left: 3px; letter-spacing: -.15px; }
.tab.t3 svg { margin-right: 4px; }
.ic1 { width: 9px; height: 9px; margin: 0 6px 0 3px; background: linear-gradient(135deg, #8fb0d4, #fff); flex: none; }
.ic2 { width: 9px; height: 9px; margin: 0 6px 0 1px; border: 1px solid #999; background: #fafafa; flex: none; }
.page { height: 253px; background: #fff; border: 1px solid #d9d9d9; padding: 7px 7px 0 7px; }
.paints { display: flex; align-items: center; height: 30px; }
.pbtn { width: 30px; height: 29px; flex: none; display: flex; align-items: center; justify-content: center; }
.pbtn.on, .rule.on { background: #cce8ff; border: 1px solid #99d1ff; }
.pbtn i { width: 20px; height: 20px; border: 1px solid #222; }
.flat { background: #98b4d6; }
.linear { background: linear-gradient(135deg, #98b4d6, #fff); }
.radial { background: radial-gradient(circle, #fff, #98b4d6); }
.mesh { background: conic-gradient(#fff 25%, #98b4d6 0 50%, #fff 0 75%, #98b4d6 0); }
.pattern { background: conic-gradient(from 45deg, #98b4d6 25%, #fff 0 50%, #98b4d6 0 75%, #fff 0) 0 0 / 9px 9px; }
.pbtn .swatch { background: #fff; border: 3px solid #98b4d6; outline: 1px solid #222; outline-offset: -1px; box-shadow: inset -2px -2px #556; }
.q { font: 900 21px "Open Sans", sans-serif; -webkit-text-stroke: 1px #000; }
.rule { width: 19px; height: 29px; display: flex; align-items: center; justify-content: center; flex: none; }
.q + .rule { margin-left: auto; }
.page strong { display: block; margin-top: 8px; letter-spacing: -.4px; }
.row { display: flex; margin-top: 4px; height: 24px; align-items: center; }
.slider { width: 414px; height: 24px; border: 1px solid #a9a9a9; border-right: 0; background: #fff; display: flex; justify-content: space-between; align-items: center; padding: 0 3px 2px 5px; margin-right: 1px; }
.slider.full { padding: 1px 1px 1px 1px; }
.slider p { margin: 0; flex: 1; height: 20px; display: flex; justify-content: space-between; padding: 0 1px 0 3px; background: #b6c4ce; border: 1px solid #fff; border-color: #c8d0d6 #000 #000 #c8d0d6; box-shadow: inset -1px -1px #666; line-height: 16px; }
.cmds { width: 31px; flex: none; padding: 2px 0 0 2px; }
.cmds span, .snaps span { width: 26px; height: 26px; display: flex; align-items: center; justify-content: center; margin: 0 1px; }
.snaps { width: 30px; flex: none; padding-top: 2px; }
.snaps span { margin: 0 2px; height: 25px; margin-bottom: 1px; }
.cmds hr, .snaps hr { width: 16px; height: 12px; border: 0; margin: 0 6px; background: linear-gradient(#a8a8a8, #a8a8a8) 0 5px / 16px 1px no-repeat; }
.snaps hr { margin: 0 7px; }
.palette { height: 18px; flex: none; border-top: 1px solid #888; box-shadow: inset 0 1px #000; padding: 1px 0 3px 2px; display: flex; align-items: center; background: #f0f0f0; }
.palette i { width: 14.020px; height: 14px; flex: none; }
.pal { margin-left: 2px; }
.pscroll { height: 17px; flex: none; border-top: 1px solid #fff; background: #f0f0f0; display: flex; align-items: center; padding: 1px 14px 0 5px; }
.pscroll i { width: 591px; height: 14px; background: #cdcdcd; margin-left: 6px; flex: none; }
.gap { flex: 1; }
.status { height: 26px; flex: none; background: #f0f0f0; display: flex; align-items: center; padding-left: 2px; overflow: hidden; }
.style { width: 125px; flex: none; line-height: 13px; font-size: 11.500px; letter-spacing: -.5px; }
.style div { display: flex; height: 13px; }
.k { width: 43px; white-space: nowrap; }
.style em { margin-left: 26px; }
.black { width: 47px; height: 13px; background: #000; margin-right: 3px; }
.o { width: 13px; }
.oe { width: 37px; }
.so { height: 20px; width: 10px; }
.fsep { width: 1px; height: 26px; background: #ccc; margin: 0 6px 0 3px; }
.fl { margin: 0 3px 0 7px; }
.layer { width: 73px; height: 25px; flex: none; border: 1px solid #a9a9a9; background: #fff; display: flex; line-height: 22px; margin-left: 0; }
.layer span { flex: 1; padding-left: 3px; font-weight: 600; }
.layer i { width: 17px; border-left: 1px solid #a9a9a9; background: #f0f0f0; display: flex; align-items: center; justify-content: center; }
.msg { margin: -2px 0 0 2px; white-space: nowrap; letter-spacing: -.32px; }
.msg b { letter-spacing: -.15px; }
.coords { margin: -2px 0 0 auto; width: 68px; border-left: 1px solid #bbb; padding: 0 6px 0 3px; font: 11.500px/13px "DejaVu Sans Mono", monospace; letter-spacing: -.9px; }
.coords div { display: flex; justify-content: space-between; }
.z { width: 15px; padding-left: 4px; }
.ze { width: 45px; padding-left: 6px; }
.status > :last-child { margin-right: 1px; }
</style>
